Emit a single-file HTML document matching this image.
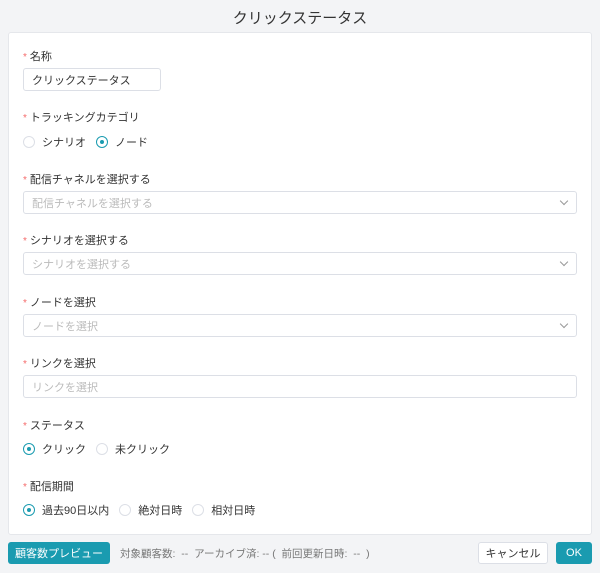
<!DOCTYPE html>
<html><head><meta charset="utf-8"><style>
*{box-sizing:border-box;margin:0;padding:0}
body{width:600px;height:573px;background:#f3f4f6;font-family:"Liberation Sans","Noto Sans CJK JP",sans-serif;color:#333;position:relative;overflow:hidden;font-size:11px}
.a{position:absolute}
.title{left:0;right:0;top:7px;text-align:center;font-size:15px;color:#333}
.card{left:8px;top:32px;width:584px;height:503px;background:#fff;border:1px solid #e5e7eb;border-radius:3px}
.lbl{left:23px;font-size:11px;color:#333}
.lbl b{color:#f56c6c;font-weight:normal;margin-right:3px;font-size:10px}
.inp{left:23px;height:23px;border:1px solid #dcdfe6;border-radius:3px;background:#fff;padding-left:8px;display:flex;align-items:center;font-size:11px;color:#bbb}
.chev{position:absolute;right:9px;top:6px;width:6px;height:6px;border-right:1px solid #999;border-bottom:1px solid #999;transform:rotate(45deg)}
.rad{display:inline-flex;align-items:center;margin-right:10px;font-size:11px;color:#333}
.rad i{width:12px;height:12px;border:1px solid #dcdfe6;border-radius:50%;margin-right:7px;display:inline-block;position:relative}
.rad i.on{border-color:#1a9bb0}
.rad i.on:after{content:"";position:absolute;left:3px;top:3px;width:4px;height:4px;border-radius:50%;background:#1a9bb0}
.btn{top:542px;height:22px;border-radius:3px;font-size:11px;display:flex;align-items:center;justify-content:center}
</style></head><body>
<div class="a title">クリックステータス</div>
<div class="a card"></div>
<div class="a lbl" style="top:48px"><b>*</b>名称</div>
<div class="a inp" style="top:68px;width:138px;color:#333">クリックステータス</div>
<div class="a lbl" style="top:109px"><b>*</b>トラッキングカテゴリ</div>
<div class="a" style="left:23px;top:134px"><span class="rad"><i></i>シナリオ</span><span class="rad"><i class="on"></i>ノード</span></div>
<div class="a lbl" style="top:171px"><b>*</b>配信チャネルを選択する</div>
<div class="a inp" style="top:191px;width:554px">配信チャネルを選択する<span class="chev"></span></div>
<div class="a lbl" style="top:232px"><b>*</b>シナリオを選択する</div>
<div class="a inp" style="top:252px;width:554px">シナリオを選択する<span class="chev"></span></div>
<div class="a lbl" style="top:294px"><b>*</b>ノードを選択</div>
<div class="a inp" style="top:314px;width:554px">ノードを選択<span class="chev"></span></div>
<div class="a lbl" style="top:355px"><b>*</b>リンクを選択</div>
<div class="a inp" style="top:375px;width:554px">リンクを選択</div>
<div class="a lbl" style="top:417px"><b>*</b>ステータス</div>
<div class="a" style="left:23px;top:441px"><span class="rad"><i class="on"></i>クリック</span><span class="rad"><i></i>未クリック</span></div>
<div class="a lbl" style="top:478px"><b>*</b>配信期間</div>
<div class="a" style="left:23px;top:502px"><span class="rad"><i class="on"></i>過去90日以内</span><span class="rad"><i></i>絶対日時</span><span class="rad"><i></i>相対日時</span></div>
<div class="a btn" style="left:8px;width:102px;background:#1a9bb0;color:#fff">顧客数プレビュー</div>
<div class="a" style="left:120px;top:546px;font-size:10.5px;color:#777">対象顧客数: &nbsp;-- &nbsp;アーカイブ済: -- ( &nbsp;前回更新日時: &nbsp;-- &nbsp;)</div>
<div class="a btn" style="left:478px;width:70px;background:#fff;border:1px solid #dcdfe6;color:#333">キャンセル</div>
<div class="a btn" style="left:556px;width:36px;background:#1a9bb0;color:#fff">OK</div>
</body></html>
